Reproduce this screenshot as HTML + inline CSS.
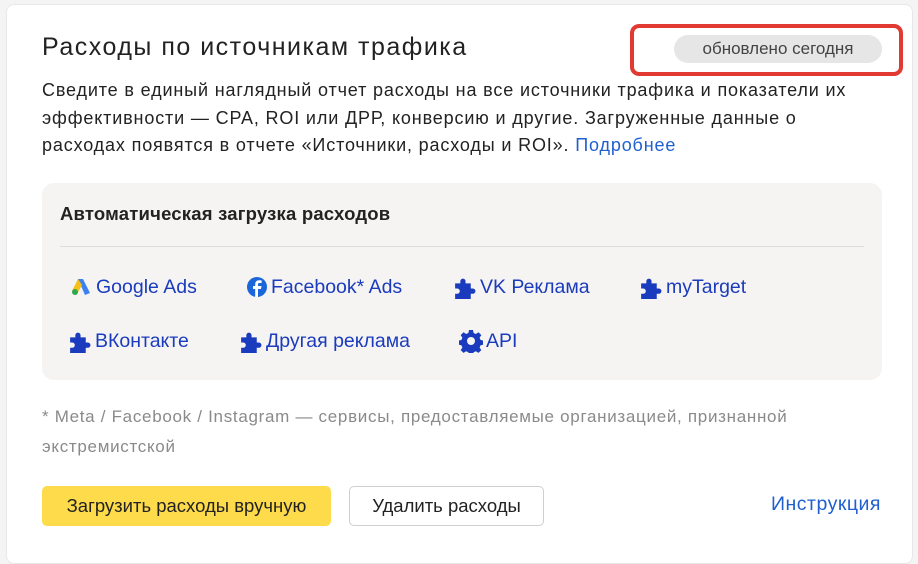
<!DOCTYPE html>
<html><head><meta charset="utf-8"><style>
*{box-sizing:border-box;margin:0;padding:0}
body{width:918px;height:554px;background:#f4f4f4;font-family:"Liberation Sans","DejaVu Sans",sans-serif;position:relative;overflow:hidden}
.card{position:absolute;left:6px;top:4px;width:907px;height:560px;background:#fff;border:1px solid #e8e8e8;border-radius:8px}
.a{position:absolute;white-space:nowrap}
.lnk{position:absolute;font-size:19.5px;color:#1a3bbd;display:flex;align-items:center;gap:3px;white-space:nowrap;height:26px}
</style></head><body>
<div class="card"></div>
<div class="a" style="left:42px;top:33px;font-size:25px;letter-spacing:1.5px;color:#222">Расходы по источникам трафика</div>
<div class="a" style="left:630px;top:24px;width:273px;height:52px;border:4px solid #e03a33;border-radius:9px"></div>
<div class="a" style="left:674px;top:35px;width:208px;height:28px;background:#e6e6e6;border-radius:14px;font-size:17px;color:#444;text-align:center;line-height:28px">обновлено сегодня</div>
<div class="a" style="left:42px;top:77px;font-size:18px;letter-spacing:0.85px;line-height:27.5px;color:#222;white-space:normal;width:835px">Сведите в единый наглядный отчет расходы на все источники трафика и показатели их эффективности — CPA, ROI или ДРР, конверсию и другие. Загруженные данные о расходах появятся в отчете «Источники, расходы и ROI». <span style="color:#1f5fd0">Подробнее</span></div>
<div class="a" style="left:42px;top:183px;width:840px;height:197px;background:#f5f4f2;border-radius:12px"></div>
<div class="a" style="left:60px;top:203px;font-size:18.5px;color:#222;font-weight:bold;letter-spacing:0.2px">Автоматическая загрузка расходов</div>
<div class="a" style="left:60px;top:246px;width:804px;height:1px;background:#ddd"></div>
<div class="lnk" style="left:69px;top:274px"><svg width="24" height="20" viewBox="0 0 22 20"><path d="M8 2 L13 2 L20 16 L15 18Z" fill="#3b82f0"/><path d="M8 2 L2 14 L7 17 L12 8Z" fill="#f6bf1a"/><circle cx="5" cy="15" r="3" fill="#2ea84a"/></svg>Google Ads</div>
<div class="lnk" style="left:246px;top:274px"><svg width="22" height="22" viewBox="0 0 22 22"><circle cx="11" cy="11" r="10" fill="#1b66d8"/><path d="M12 21V13h3l.5-3H12V8.5c0-1 .4-1.5 1.5-1.5H15.6V4.4C15 4.3 14 4.2 13 4.2c-2.3 0-3.8 1.4-3.8 4V10H7v3h2.2v8z" fill="#fff"/></svg>Facebook* Ads</div>
<svg width="0" height="0" style="position:absolute"><defs><symbol id="pz" viewBox="0 0 24 24"><path d="M3 8h5V6a2.5 2.5 0 015 0v2h5v5h2a2.5 2.5 0 010 5h-2v5H3v-5h2a2.5 2.5 0 000-5H3z" fill="#1a3bbd"/></symbol></defs></svg>
<div class="lnk" style="left:452px;top:274px"><svg width="25" height="25"><use href="#pz"/></svg>VK Реклама</div>
<div class="lnk" style="left:638px;top:274px"><svg width="25" height="25"><use href="#pz"/></svg>myTarget</div>
<div class="lnk" style="left:67px;top:328px"><svg width="25" height="25"><use href="#pz"/></svg>ВКонтакте</div>
<div class="lnk" style="left:238px;top:328px"><svg width="25" height="25"><use href="#pz"/></svg>Другая реклама</div>
<div class="lnk" style="left:459px;top:328px"><svg width="24" height="24" viewBox="0 0 24 24"><path d="M10 1h4l.6 3 2.3 1 2.6-1.7 2.8 2.8-1.7 2.6 1 2.3 3 .6v4l-3 .6-1 2.3 1.7 2.6-2.8 2.8-2.6-1.7-2.3 1-.6 3h-4l-.6-3-2.3-1-2.6 1.7-2.8-2.8 1.7-2.6-1-2.3-3-.6v-4l3-.6 1-2.3-1.7-2.6 2.8-2.8 2.6 1.7 2.3-1z" fill="#1a3bbd"/><circle cx="12" cy="12" r="4" fill="#f5f4f2"/></svg>API</div>
<div class="a" style="left:42px;top:402px;font-size:17px;letter-spacing:0.7px;line-height:30px;color:#8a8a8a;white-space:normal;width:800px">* Meta / Facebook / Instagram — сервисы, предоставляемые организацией, признанной экстремистской</div>
<div class="a" style="left:42px;top:486px;width:289px;height:40px;background:#fddb4a;border-radius:5px;font-size:18.5px;color:#222;text-align:center;line-height:40px">Загрузить расходы вручную</div>
<div class="a" style="left:349px;top:486px;width:195px;height:40px;border:1px solid #cfcfcf;border-radius:5px;font-size:18.5px;color:#222;text-align:center;line-height:38px;background:#fff">Удалить расходы</div>
<div class="a" style="left:771px;top:493px;font-size:19.5px;letter-spacing:0.5px;color:#1f5fd0">Инструкция</div>
</body></html>
